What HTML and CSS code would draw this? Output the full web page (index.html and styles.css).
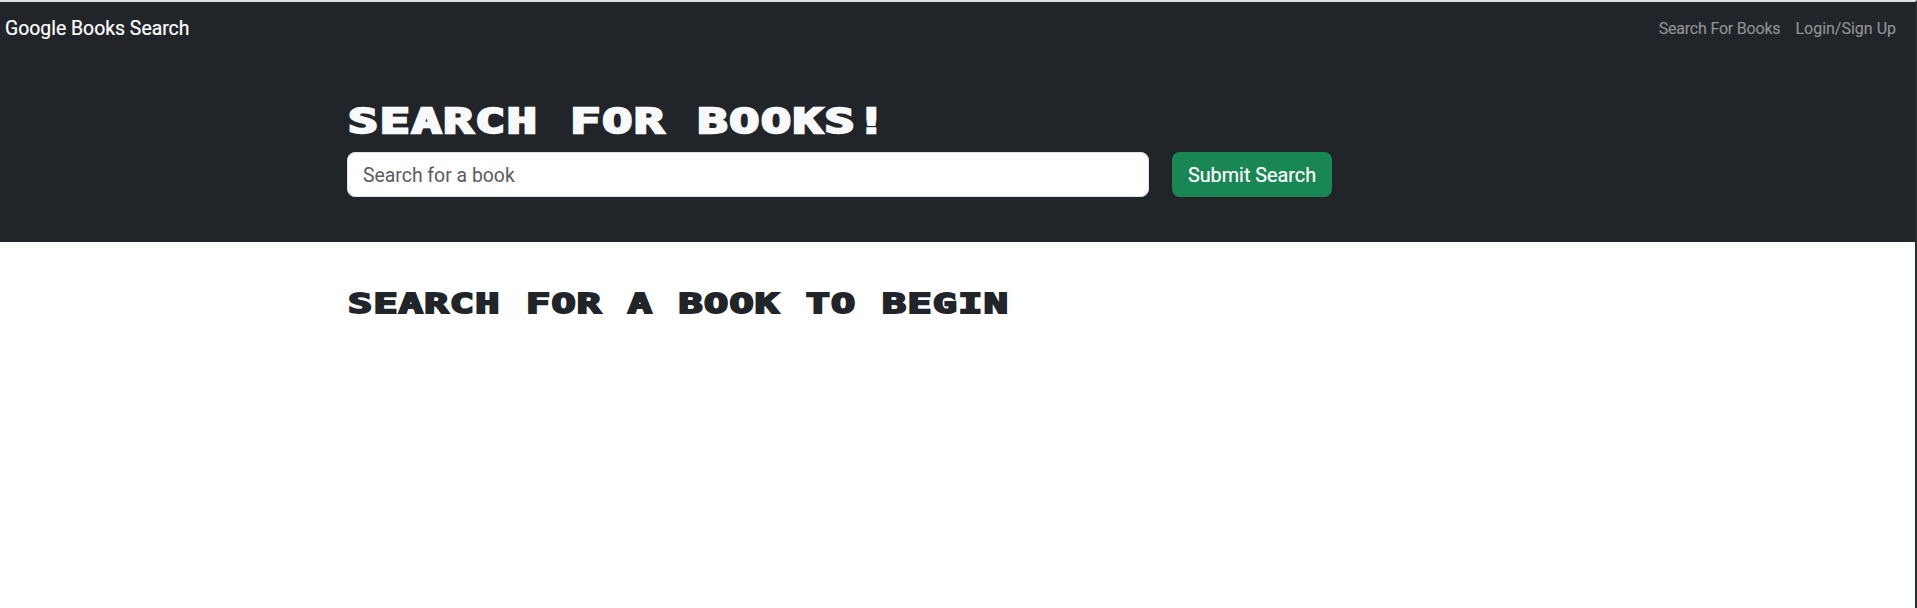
FILE: index.html
```
<!DOCTYPE html>
<html lang="en">
<head>
<meta charset="utf-8">
<title>Google Books Search</title>
<link rel="stylesheet" href="styles.css">
</head>
<body>
<div class="page">
  <nav class="navbar">
    <a class="brand">Google Books Search</a>
    <div class="links"><a class="link link-search">Search For Books</a><a class="link link-login">Login/Sign Up</a></div>
  </nav>
  <header class="hero">
    <h1 class="title">SEARCH FOR BOOKS!</h1>
    <form class="search">
      <input class="field" type="text" placeholder="Search for a book">
      <button class="submit" type="button">Submit Search</button>
    </form>
  </header>
  <main class="results">
    <h2 class="subtitle">SEARCH FOR A BOOK TO BEGIN</h2>
  </main>
</div>
</body>
</html>
```
FILE: styles.css
```
* { box-sizing: border-box; }
html, body { margin: 0; height: 100%; }
body { font-family: Roboto, "Liberation Sans", sans-serif; color: #212529; overflow: hidden; }
.page { height: 608px; background: #fff; border-top: 2px solid #dee2e6; border-right: 2px solid #292c30; }
.navbar { height: 52px; padding: 1px 19px 0 5px; display: flex; align-items: center; justify-content: space-between; background: #212529; }
.brand { font-size: 19.4px; line-height: 30px; color: #fff; white-space: nowrap; -webkit-text-stroke: 0.2px #fff; }
.links { display: flex; gap: 15px; }
.link { font-size: 16px; line-height: 24px; color: #909294; white-space: nowrap; -webkit-text-stroke: 0.15px #909294; }
.link-search { letter-spacing: -0.2px; }
.hero { height: 188px; padding: 46px 0 0 348px; background: #212529; color: #f8f9fa; }
.title, .subtitle { margin: 0; width: max-content; font-family: "DejaVu Sans Mono", monospace; font-weight: 700; white-space: nowrap; transform-origin: left center; }
.title { font-size: 34px; line-height: 42px; height: 52px; letter-spacing: 1.14px; transform: scaleX(1.47); -webkit-text-stroke: 2.3px #f8f9fa; }
.search { display: flex; gap: 23px; margin-left: -1px; }
.field { width: 802px; height: 45px; padding: 1px 15px 0 15px; border: 1px solid #dee2e6; border-radius: 8px; background: #fff; font: 19.4px/30px Roboto, sans-serif; color: #212529; }
.field::placeholder { color: #595c5f; opacity: 1; }
.submit { width: 160px; height: 45px; padding: 2px 0 0; border: 0; border-radius: 8px; background: #198754; color: #fff; font: 19.8px/30px Roboto, sans-serif; -webkit-text-stroke: 0.2px #fff; }
.results { padding: 44px 0 0 348px; }
.subtitle { font-size: 26.4px; line-height: 36px; letter-spacing: 0.84px; transform: scaleX(1.52); -webkit-text-stroke: 1.9px #212529; }
```
